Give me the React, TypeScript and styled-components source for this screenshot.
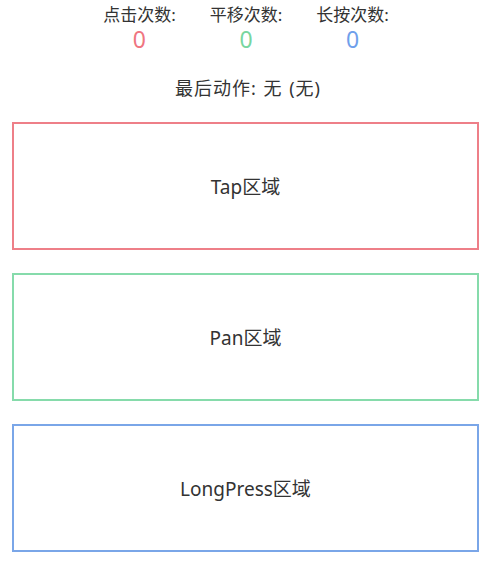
import React from 'react';
import styled, { createGlobalStyle } from 'styled-components';

const GlobalStyle = createGlobalStyle`
    html, body {
        margin: 0;
        padding: 0;
        background: #ffffff;
    }
    body {
        font-family: 'Noto Sans', 'Noto Sans CJK SC', sans-serif;
        color: #333333;
    }
`;

const Page = styled.div`
    width: 498px;
    height: 576px;
    display: flex;
    flex-direction: column;
    overflow: hidden;
`;

const StatsRow = styled.div`
    display: flex;
    justify-content: center;
    gap: 34px;
    padding-top: 4px;
    padding-right: 6px;
`;

const Stat = styled.div`
    display: flex;
    flex-direction: column;
    align-items: center;
`;

const StatLabel = styled.div`
    font-size: 17px;
    line-height: 22px;
    color: #333333;
`;

const StatValue = styled.div<{ $color: string }>`
    font-size: 23px;
    line-height: 26px;
    color: ${(p) => p.$color};
`;

const LastAction = styled.div`
    margin-top: 23px;
    text-align: center;
    font-size: 18px;
    letter-spacing: 1px;
    line-height: 26px;
    color: #333333;
    padding-right: 2px;
    word-spacing: 1px;
`;

const Zones = styled.div`
    display: flex;
    flex-direction: column;
    gap: 23px;
    margin-top: 21px;
    padding-left: 12px;
`;

const Zone = styled.div<{ $color: string }>`
    width: 467px;
    height: 128px;
    box-sizing: border-box;
    border: 2px solid ${(p) => p.$color};
    display: flex;
    align-items: center;
    justify-content: center;
    font-size: 19px;
    color: #333333;
`;

const stats = [
    { label: '点击次数:', value: 0, color: '#ef7580' },
    { label: '平移次数:', value: 0, color: '#78d6a0' },
    { label: '长按次数:', value: 0, color: '#6f9feb' },
];

const zones = [
    { text: 'Tap区域', color: '#ee7f88' },
    { text: 'Pan区域', color: '#86dbab' },
    { text: 'LongPress区域', color: '#7aa6e8' },
];

const App = () => (
    <>
        <GlobalStyle />
        <Page>
            <StatsRow>
                {stats.map((s) => (
                    <Stat key={s.label}>
                        <StatLabel>{s.label}</StatLabel>
                        <StatValue $color={s.color}>{s.value}</StatValue>
                    </Stat>
                ))}
            </StatsRow>
            <LastAction>最后动作: 无 (无)</LastAction>
            <Zones>
                {zones.map((z) => (
                    <Zone key={z.text} $color={z.color}>
                        {z.text}
                    </Zone>
                ))}
            </Zones>
        </Page>
    </>
);

export default App;
